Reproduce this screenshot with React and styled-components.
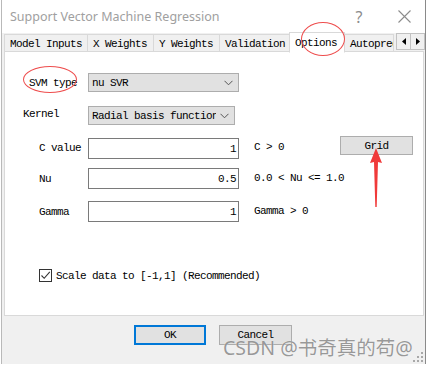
import React from "react";
import styled, { createGlobalStyle } from "styled-components";

const Global = createGlobalStyle`
  html, body { margin: 0; padding: 0; background: #ffffff; }
  body { width: 426px; height: 366px; overflow: hidden; }
`;

const MONO = `"Liberation Mono", "DejaVu Sans Mono", monospace`;

const Window = styled.div`
  position: relative;
  width: 423px;
  height: 364px;
  margin-left: 1px;
  border-left: 1px solid #b9b9b9;
  border-right: 1px solid #8a8a8a;
  background: #f0f0f0;
  display: flex;
  flex-direction: column;
  font-family: ${MONO};
  font-size: 11px;
  letter-spacing: -0.6px;
  color: #000;
`;

const TitleBar = styled.div`
  height: 33px;
  background: #fff;
  display: flex;
  align-items: center;
  padding-left: 8px;
  font-family: "Noto Sans", "Liberation Sans", sans-serif;
  font-size: 12.5px;
  letter-spacing: 0;
  color: #a0a0a0;
`;

const Title = styled.div`
  flex: 1;
  margin-top: -1px;
`;

const TitleBtn = styled.div`
  width: ${(p) => p.w}px;
  margin-right: ${(p) => p.mr || 0}px;
  display: flex;
  justify-content: center;
  align-items: center;
  color: #8c8c8c;
  font-size: 16px;
`;

const TabStrip = styled.div`
  height: 18px;
  display: flex;
  align-items: flex-end;
  padding-left: 3px;
  position: relative;
  z-index: 1;
`;

const Tab = styled.div`
  height: ${(p) => (p.active ? 21 : 17)}px;
  box-sizing: border-box;
  padding: 0 ${(p) => p.pad || 5}px;
  display: flex;
  align-items: center;
  background: ${(p) => (p.active ? "#fff" : "#f0f0f0")};
  border: 1px solid #d9d9d9;
  border-bottom: ${(p) => (p.active ? "1px solid #fff" : "none")};
  margin-left: -1px;
  margin-bottom: ${(p) => (p.active ? -2 : 0)}px;
  white-space: nowrap;
  overflow: hidden;
  width: ${(p) => p.w}px;
  flex-shrink: 0;
  padding-top: ${(p) => (p.active ? 0 : 1)}px;
`;

const ScrollBtns = styled.div`
  display: flex;
  height: 17px;
  margin-left: auto;
  margin-bottom: 1px;
  flex-shrink: 0;
`;

const ScrollBtn = styled.div`
  width: 15px;
  height: 17px;
  box-sizing: border-box;
  border: 1px solid #c2c2c2;
  background: #f0f0f0;
  display: flex;
  align-items: center;
  justify-content: center;
  margin-left: -1px;
`;

const Panel = styled.div`
  position: relative;
  height: 265px;
  margin: 0 1px 0 2px;
  box-sizing: border-box;
  background: #fff;
  border: 1px solid #d9d9d9;
  padding-top: 21px;
  display: flex;
  flex-direction: column;
`;

const Row = styled.div`
  display: flex;
  align-items: ${(p) => p.align || "center"};
  margin-top: ${(p) => p.mt || 0}px;
`;

const Label = styled.div`
  width: 83px;
  box-sizing: border-box;
  padding-left: ${(p) => p.indent}px;
  margin-top: ${(p) => p.dy || 0}px;
  position: relative;
  white-space: nowrap;
`;

const Select = styled.div`
  width: ${(p) => p.w}px;
  height: 19px;
  box-sizing: border-box;
  background: #e1e1e1;
  border: 1px solid #adadad;
  display: flex;
  align-items: center;
  padding-left: 3px;
  padding-right: 5px;
`;

const SelectText = styled.div`
  flex: 1;
  max-width: 124px;
  margin-right: auto;
  overflow: hidden;
  white-space: nowrap;
  padding-top: 1px;
`;

const Input = styled.div`
  width: 151px;
  height: 21px;
  box-sizing: border-box;
  background: #fff;
  border: 1px solid #7a7a7a;
  display: flex;
  align-items: center;
  justify-content: flex-end;
  padding-right: 2px;
  padding-top: 1px;
`;

const Hint = styled.div`
  width: 86px;
  margin-left: 15px;
  white-space: nowrap;
  margin-top: ${(p) => p.dy ?? -1}px;
`;

const Button = styled.div`
  width: ${(p) => p.w}px;
  height: ${(p) => p.h || 20}px;
  box-sizing: border-box;
  background: #e1e1e1;
  border: ${(p) => (p.primary ? "2px solid #0078d7" : "1px solid #adadad")};
  display: flex;
  align-items: center;
  justify-content: center;
  margin-top: ${(p) => p.mt || 0}px;
`;

const CheckRow = styled.label`
  display: flex;
  align-items: center;
  margin-top: 47px;
  padding-left: 34px;
  gap: 4px;
`;

const Box = styled.div`
  width: 13px;
  height: 13px;
  box-sizing: border-box;
  border: 1px solid #333;
  background: #fff;
  display: flex;
  align-items: center;
  justify-content: center;
`;

const Footer = styled.div`
  flex: 1;
  display: flex;
  justify-content: center;
  gap: 13px;
  padding-top: 9px;
  padding-right: 1px;
`;

const Ellipse = styled.div`
  position: absolute;
  left: ${(p) => p.x}px;
  top: ${(p) => p.y}px;
  width: ${(p) => p.w}px;
  height: ${(p) => p.h}px;
  border: 1px solid #ee4d4d;
  border-radius: 50%;
  box-sizing: border-box;
  pointer-events: none;
  z-index: 5;
`;

const Arrow = styled.svg`
  position: absolute;
  left: 364px;
  top: 147px;
  z-index: 5;
`;

const Watermark = styled.div`
  position: absolute;
  left: 221px;
  top: 332px;
  font-family: "Noto Sans", "Noto Sans CJK SC", sans-serif;
  font-size: 19.5px;
  letter-spacing: 0;
  color: rgba(120, 120, 120, 0.75);
  white-space: nowrap;
  z-index: 6;
  text-shadow: 0 0 1px rgba(255,255,255,0.8);
`;

const Grip = styled.svg`
  position: absolute;
  right: 2px;
  bottom: 2px;
`;

const Chevron = () => (
  <svg width="9" height="6" viewBox="0 0 9 6">
    <path d="M0.5 0.8 L4.5 4.8 L8.5 0.8" fill="none" stroke="#555" strokeWidth="1" />
  </svg>
);

export default function App() {
  return (
    <>
      <Global />
      <Window>
        <TitleBar>
          <Title>Support Vector Machine Regression</Title>
          <TitleBtn w={26} mr={11}>?</TitleBtn>
          <TitleBtn w={42}>
            <svg width="13" height="13" viewBox="0 0 13 13">
              <path d="M0.5 0.5 L12.5 12.5 M12.5 0.5 L0.5 12.5" stroke="#8c8c8c" strokeWidth="1.1" />
            </svg>
          </TitleBtn>
        </TitleBar>
        <TabStrip>
          <Tab w={84}>Model Inputs</Tab>
          <Tab w={67}>X Weights</Tab>
          <Tab w={67}>Y Weights</Tab>
          <Tab w={71}>Validation</Tab>
          <Tab w={56} active>Options</Tab>
          <Tab w={50}>Autopredict</Tab>
          <ScrollBtns>
            <ScrollBtn>
              <svg width="4" height="7" viewBox="0 0 4 7"><path d="M4 0 L0 3.5 L4 7Z" fill="#000" /></svg>
            </ScrollBtn>
            <ScrollBtn>
              <svg width="4" height="7" viewBox="0 0 4 7"><path d="M0 0 L4 3.5 L0 7Z" fill="#000" /></svg>
            </ScrollBtn>
          </ScrollBtns>
        </TabStrip>
        <Panel>
          <Row>
            <Label indent={24} dy={1}>SVM type</Label>
            <Select w={151}>
              <SelectText>nu SVR</SelectText>
              <Chevron />
            </Select>
          </Row>
          <Row mt={14}>
            <Label indent={18} dy={-4}>Kernel</Label>
            <Select w={147}>
              <SelectText>Radial basis function</SelectText>
              <Chevron />
            </Select>
          </Row>
          <Row mt={13} align="flex-start">
            <Label indent={34} dy={4}>C value</Label>
            <Input>1</Input>
            <Hint dy={3}>C &gt; 0</Hint>
            <Button w={73} h={19} mt={-2}>Grid</Button>
          </Row>
          <Row mt={9}>
            <Label indent={34}>Nu</Label>
            <Input>0.5</Input>
            <Hint>0.0 &lt; Nu &lt;= 1.0</Hint>
          </Row>
          <Row mt={12}>
            <Label indent={34}>Gamma</Label>
            <Input>1</Input>
            <Hint>Gamma &gt; 0</Hint>
          </Row>
          <CheckRow>
            <Box>
              <svg width="11" height="11" viewBox="0 0 11 11">
                <path d="M1.5 5.5 L4.2 8.3 L9.8 1.8" fill="none" stroke="#333" strokeWidth="1.1" />
              </svg>
            </Box>
            <span>Scale data to [-1,1] (Recommended)</span>
          </CheckRow>
        </Panel>
        <Footer>
          <Button w={72} primary>OK</Button>
          <Button w={73}>Cancel</Button>
        </Footer>
        <Ellipse x={299} y={22} w={44} h={34} />
        <Ellipse x={21} y={66} w={54} h={27} />
        <Arrow width="20" height="62" viewBox="0 0 20 62">
          <path d="M10 1 L16 16 L12 15 L10.7 60 L9.3 60 L8 15 L4 16 Z" fill="#f03a3a" />
        </Arrow>
        <Watermark>CSDN @书奇真的苟@</Watermark>
        <Grip width="10" height="10" viewBox="0 0 10 10">
          <g fill="#a8a8a8">
            <rect x="8" y="0" width="2" height="2" />
            <rect x="4" y="4" width="2" height="2" />
            <rect x="8" y="4" width="2" height="2" />
            <rect x="0" y="8" width="2" height="2" />
            <rect x="4" y="8" width="2" height="2" />
            <rect x="8" y="8" width="2" height="2" />
          </g>
        </Grip>
      </Window>
    </>
  );
}
